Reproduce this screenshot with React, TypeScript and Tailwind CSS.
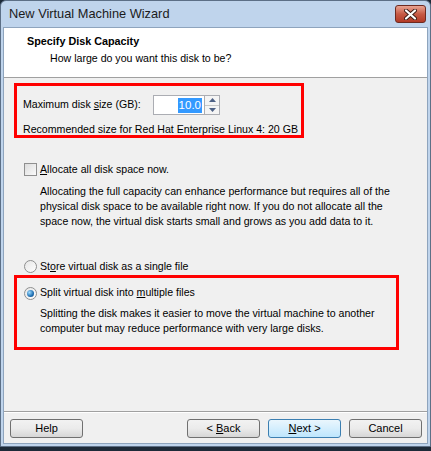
import { useState } from "react";

const font = { fontFamily: '"Liberation Sans", Arial, sans-serif' };

function Radio({ checked }: { checked: boolean }) {
  return (
    <span className="w-[13px] h-[13px] rounded-full border border-[#8e8f8f] bg-gradient-to-br from-[#e6e6e6] to-[#ffffff] flex items-center justify-center shrink-0">
      {checked && (
        <span className="w-[7px] h-[7px] rounded-full bg-[radial-gradient(circle_at_35%_35%,#9fdcff,#1f6fb2_60%,#0d3f75)]" />
      )}
    </span>
  );
}

function WinButton({ children, focused }: { children: React.ReactNode; focused?: boolean }) {
  return (
    <button
      className={`w-[73px] h-[19px] rounded-[3px] border text-[11px] leading-none text-black flex items-center justify-center ${
        focused
          ? "border-[#3c7fb1] bg-gradient-to-b from-[#eaf6fd] to-[#bee6fd]"
          : "border-[#707070] bg-gradient-to-b from-[#f2f2f2] via-[#ebebeb] to-[#d6d6d6]"
      }`}
    >
      <span className="whitespace-pre">{children}</span>
    </button>
  );
}

export default function App() {
  const [split, setSplit] = useState(true);

  return (
    <div className="w-[431px] h-[451px] bg-[#1d2a38] overflow-hidden" style={font}>
      <div className="w-[431px] h-[447px] bg-[#bfd4ec] border border-[#5c6f86] rounded-t-[6px] flex flex-col px-[2px] pb-[2px]">
        {/* title bar */}
        <div className="h-[26px] flex items-center justify-between pl-[6px] pr-[2px] shrink-0">
          <span className="text-[12.8px] text-[#1b1b1b] whitespace-nowrap">New Virtual Machine Wizard</span>
          <span className="w-[31px] h-[18px] rounded-[3px] border border-[#6d2a20] bg-gradient-to-b from-[#e8a493] via-[#c75a45] to-[#b23a26] flex items-center justify-center">
            <svg width="13" height="11" viewBox="0 0 13 11">
              <path d="M2 1.5 L11 9.5 M11 1.5 L2 9.5" stroke="#3a1a14" strokeWidth="4" strokeLinecap="round" />
              <path d="M2 1.5 L11 9.5 M11 1.5 L2 9.5" stroke="#ffffff" strokeWidth="2.2" strokeLinecap="round" />
            </svg>
          </span>
        </div>

        {/* client */}
        <div className="flex-1 flex flex-col border border-[#8ea4bd] bg-[#f0f0f0] text-[10.6px] text-black">
          <div className="h-[50px] bg-white border-b border-[#a0a0a0] pl-[23px] pt-[5px] shrink-0">
            <div className="text-[10.8px] font-bold leading-[16px]">Specify Disk Capacity</div>
            <div className="leading-[16px] pl-[23px] pt-[1px]">How large do you want this disk to be?</div>
          </div>

          <div className="flex-1 pl-[10px] pt-[5px]">
            <div className="w-[290px] h-[55px] border-[3px] border-[#ff0000] pl-[6px] pt-[9px] whitespace-nowrap">
              <div className="flex items-center h-[20px]">
                <span className="w-[130px]">
                  Maximum disk <u>s</u>ize (GB):
                </span>
                <div className="flex">
                  <div className="w-[52px] h-[20px] border border-[#abadb3] bg-white flex items-center justify-end pr-[2px]">
                    <span className="bg-[#3399ff] text-white text-[11.5px] px-[1px] leading-[15px]">10.0</span>
                  </div>
                  <div className="w-[15px] h-[20px] border border-[#abadb3] border-l-0 flex flex-col bg-[#f4f4f4]">
                    <span className="flex-1 flex items-center justify-center border-b border-[#c8c8c8]">
                      <svg width="7" height="4" viewBox="0 0 7 4"><path d="M0 4 L3.5 0 L7 4Z" fill="#4d6185" /></svg>
                    </span>
                    <span className="flex-1 flex items-center justify-center">
                      <svg width="7" height="4" viewBox="0 0 7 4"><path d="M0 0 L3.5 4 L7 0Z" fill="#4d6185" /></svg>
                    </span>
                  </div>
                </div>
              </div>
              <div className="mt-[6px] leading-[16px]">Recommended size for Red Hat Enterprise Linux 4: 20 GB</div>
            </div>

            <div className="mt-[24px] pl-[10px]">
              <div className="flex items-center gap-[3px] h-[15px]">
                <span className="w-[13px] h-[13px] border border-[#8f8f8f] bg-gradient-to-br from-[#dcdcdc] to-[#fbfbfb] shrink-0" />
                <span>
                  <u>A</u>llocate all disk space now.
                </span>
              </div>
              <p className="pl-[16px] mt-[7px] leading-[15px] w-[378px]">
                Allocating the full capacity can enhance performance but requires all of the physical disk space to be available right now. If you do not allocate all the space now, the virtual disk starts small and grows as you add data to it.
              </p>

              <div className="flex items-center gap-[3px] h-[15px] mt-[30px]" onClick={() => setSplit(false)}>
                <Radio checked={!split} />
                <span>
                  St<u>o</u>re virtual disk as a single file
                </span>
              </div>
            </div>

            <div className="mt-[1px] w-[385px] h-[75px] border-[3px] border-[#ff0000] pl-[7px] pt-[8px]">
              <div className="flex items-center gap-[3px] h-[14px]" onClick={() => setSplit(true)}>
                <Radio checked={split} />
                <span>
                  Split virtual disk into <u>m</u>ultiple files
                </span>
              </div>
              <p className="pl-[16px] mt-[6px] leading-[15px] w-[370px]">
                Splitting the disk makes it easier to move the virtual machine to another computer but may reduce performance with very large disks.
              </p>
            </div>
          </div>

          <div className="h-[32px] border-t border-[#a0a0a0] shadow-[inset_0_1px_0_#ffffff] flex items-center pl-[6px] pr-[5px] pt-[2px] shrink-0">
            <WinButton>Help</WinButton>
            <div className="flex-1" />
            <div className="flex gap-[8px]">
              <WinButton>
                {"< "}<u>B</u>ack
              </WinButton>
              <WinButton focused>
                <u>N</u>ext{" >"}
              </WinButton>
              <WinButton>Cancel</WinButton>
            </div>
          </div>
        </div>
      </div>
    </div>
  );
}
